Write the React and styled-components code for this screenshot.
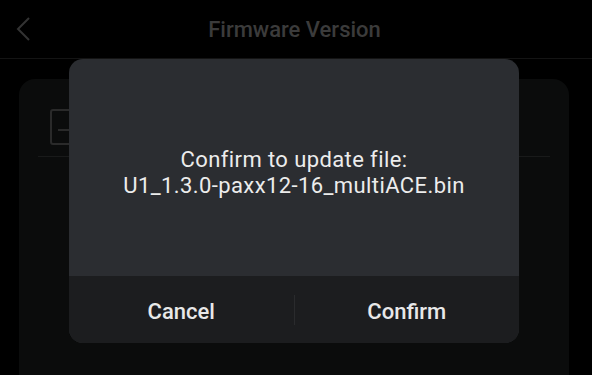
import styled, { createGlobalStyle } from "styled-components";

const Global = createGlobalStyle`
    html, body {
        margin: 0;
        padding: 0;
        background: #000;
    }
    * {
        box-sizing: border-box;
    }
`

function App() {
    return (
        <Screen>
            <Global />
            <Header>
                <BackButton>
                    <svg width="16" height="26" viewBox="0 0 16 26">
                        <path d="M13 2 L2 13 L13 24" fill="none" stroke="#333" strokeWidth="2" />
                    </svg>
                </BackButton>
                <Title>Firmware Version</Title>
            </Header>
            <Content>
                <Card>
                    <FileRow>
                        <FileIcon>
                            <svg width="28" height="36" viewBox="0 0 28 36">
                                <rect x="1" y="1" width="26" height="34" rx="2" fill="none" stroke="#2a2a2a" strokeWidth="2" />
                                <path d="M8 21 H24" stroke="#2a2a2a" strokeWidth="2" />
                            </svg>
                        </FileIcon>
                    </FileRow>
                </Card>
            </Content>
            <Overlay>
                <Dialog>
                    <Message>
                        Confirm to update file:
                        <br />
                        U1_1.3.0-paxx12-16_multiACE.bin
                    </Message>
                    <Actions>
                        <ActionButton>Cancel</ActionButton>
                        <Divider />
                        <ActionButton>Confirm</ActionButton>
                    </Actions>
                </Dialog>
            </Overlay>
        </Screen>
    );
}

export default App;

const Screen = styled.div`
    position: relative;
    width: 592px;
    height: 375px;
    overflow: hidden;
    background: #000;
    display: flex;
    flex-direction: column;
    font-family: Roboto, "Noto Sans", sans-serif;
`

const Header = styled.div`
    position: relative;
    height: 59px;
    flex-shrink: 0;
    display: flex;
    align-items: center;
    justify-content: center;
    border-bottom: 1px solid #141414;
`

const BackButton = styled.div`
    position: absolute;
    left: 16px;
    top: 16px;
    display: flex;
`

const Title = styled.div`
    color: #3b3b3b;
    font-size: 22px;
    font-weight: 500;
    margin-right: 3px;
`

const Content = styled.div`
    flex: 1;
    padding: 20px 23px 0 19px;
    display: flex;
`

const Card = styled.div`
    flex: 1;
    background: #0b0c0c;
    border-radius: 16px 16px 0 0;
    padding: 22px 19px 0 19px;
`

const FileRow = styled.div`
    display: flex;
    align-items: center;
    height: 56px;
    padding: 0 12px;
    border-bottom: 1px solid #191a1a;
    padding-bottom: 2px;
`

const FileIcon = styled.div`
    display: flex;
    margin-top: -2px;
`

const Overlay = styled.div`
    position: absolute;
    inset: 0;
    display: flex;
    justify-content: center;
    align-items: flex-start;
    padding-top: 59px;
    padding-right: 4px;
`

const Dialog = styled.div`
    width: 450px;
    height: 284px;
    border-radius: 14px;
    overflow: hidden;
    background: #2b2d31;
    display: flex;
    flex-direction: column;
`

const Message = styled.div`
    flex: 1;
    display: flex;
    flex-direction: column;
    justify-content: center;
    align-items: center;
    text-align: center;
    color: #ececec;
    font-size: 22px;
    line-height: 26px;
    letter-spacing: 0.4px;
    padding-top: 10px;
`

const Actions = styled.div`
    height: 67px;
    flex-shrink: 0;
    background: #1c1d1f;
    display: flex;
    align-items: center;
`

const ActionButton = styled.div`
    flex: 1;
    text-align: center;
    color: #e8e8e8;
    font-size: 22px;
    font-weight: 500;
    padding-top: 3px;
`

const Divider = styled.div`
    width: 1px;
    height: 30px;
    background: #2a2b2d;
`
